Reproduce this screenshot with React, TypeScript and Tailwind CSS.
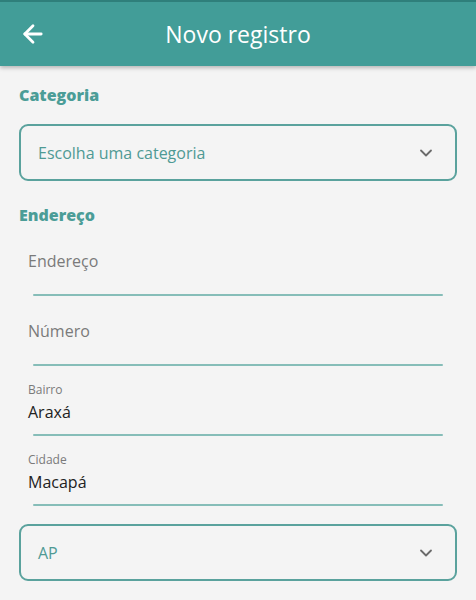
import { ArrowLeft, ChevronDown } from "lucide-react";

const font = { fontFamily: "'Open Sans', Lato, sans-serif" };

function Select({ label }: { label: string }) {
  return (
    <div className="flex h-[57px] items-center justify-between rounded-[9px] border-2 border-[#5aa29d] pl-[17px] pr-[19px]">
      <span className="text-[16px] text-[#4f9a94]">{label}</span>
      <ChevronDown size={20} strokeWidth={2.2} className="text-[#6b6b6b]" />
    </div>
  );
}

function Field({ label, value }: { label?: string; value: string }) {
  return (
    <div className="flex flex-col px-[9px]">
      <div className="flex h-[60px] flex-col justify-end pb-[10px]">
        {label && (
          <span className="mb-[2px] text-[12px] leading-[16px] text-[#7a7a7a]">{label}</span>
        )}
        <span
          className={
            label
              ? "text-[16px] leading-[24px] text-[#222]"
              : "pb-[11px] text-[16px] leading-[24px] text-[#7a7a7a]"
          }
        >
          {value}
        </span>
      </div>
      <div className="mx-[5px] h-[2px] rounded-full bg-[#86bdb8]" />
    </div>
  );
}

export default function App() {
  return (
    <div className="min-h-[600px] w-[476px] bg-[#f4f4f4]" style={font}>
      {/* Top bar */}
      <header className="relative flex h-[66px] items-center justify-center border-t-2 border-[#2f7f7b] bg-[#429d98] shadow-[0_2px_4px_rgba(0,0,0,0.25)]">
        <ArrowLeft size={28} strokeWidth={2.4} className="absolute left-[19px] text-white" />
        <h1 className="text-[23px] text-white">Novo registro</h1>
      </header>

      <div className="flex flex-col px-[19px]">
        <h2 className="mt-[17px] text-[16px] font-extrabold text-[#4b9d97]">Categoria</h2>
        <div className="mt-[17px]">
          <Select label="Escolha uma categoria" />
        </div>

        <h2 className="mt-[22px] text-[16px] font-extrabold text-[#4b9d97]">Endereço</h2>

        <div className="mt-[7px] flex flex-col gap-[8px]">
          <Field value="Endereço" />
          <Field value="Número" />
          <Field label="Bairro" value="Araxá" />
          <Field label="Cidade" value="Macapá" />
        </div>

        <div className="mt-[18px]">
          <Select label="AP" />
        </div>
      </div>
    </div>
  );
}
